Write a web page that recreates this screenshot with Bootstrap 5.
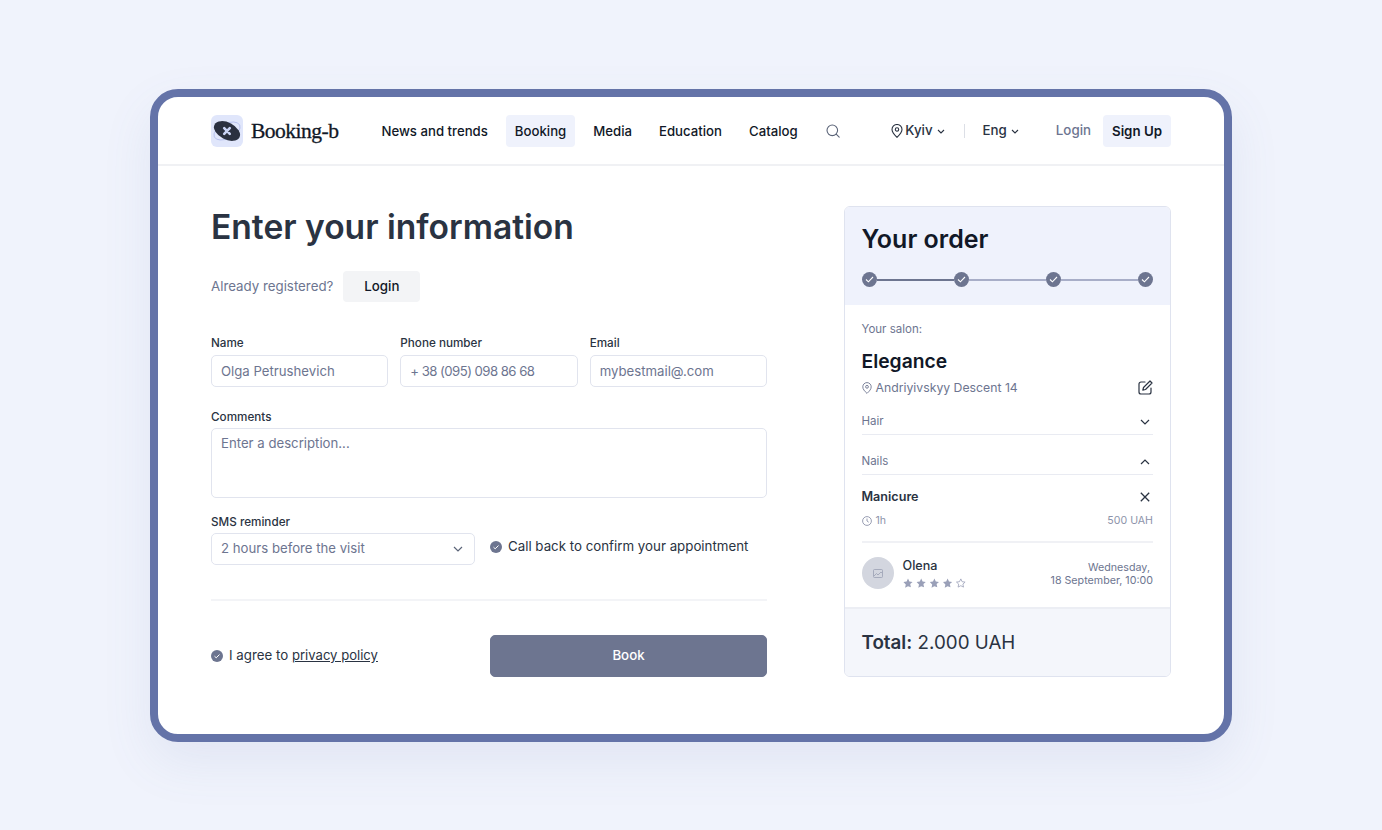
<!DOCTYPE html>
<html lang="en">
<head>
<meta charset="utf-8">
<title>Booking-b</title>
<link rel="stylesheet" href="https://cdn.jsdelivr.net/npm/bootstrap@5.3.0/dist/css/bootstrap.min.css">
<style>
html,body{height:100%}
body{background:#f0f3fc;font-family:Inter,"Noto Sans",sans-serif;color:#2a3342;font-size:13.3px;overflow:hidden}
.stage{height:830px;padding-top:89px;display:flex;justify-content:center}
.frame{width:1082px;height:653px;background:#fff;border:8px solid #6473a8;border-radius:28px;box-shadow:0 20px 50px rgba(100,115,168,.1);overflow:hidden}
.topbar{height:69px;padding:1px 53px 0;border-bottom:2px solid #f0f1f4}
.logo-box{width:32px;height:32px;background:#e0e6fb;border-radius:6px;flex:none}
.logo-text{font-family:"Liberation Serif",serif;font-size:21.6px;color:#111827;letter-spacing:-.55px;margin-left:8px;-webkit-text-stroke:.3px #111827}
.nav-main{margin-left:34px}
.nav-main a{color:#111827;font-weight:500;text-decoration:none;font-size:13.2px;padding:0 9px;height:32px;line-height:32px;border-radius:4px;margin-right:9px;white-space:nowrap}
.nav-main a.on{background:#eff2fc}
.search-ic{margin-left:10px}
.sep{width:1px;height:14px;background:#dcdfe6;margin:0 18px 0 19px}
.loc{color:#2a3342;font-weight:500;white-space:nowrap;margin-left:2px}
.eng{margin-left:0}
.btn-sign{background:#eff2fc;color:#111827;font-weight:600;font-size:13.3px;height:32px;padding:0 9px;line-height:32px;border:0;border-radius:4px}
.login-link{color:#6d7590;font-weight:500;margin:0 12px 0 37px}
.content{padding:40px 53px 0}
.left-col{width:556px;flex:none}
.right-col{width:327.5px;flex:none;margin-left:76.5px}
h1.title{font-size:33.6px;font-weight:600;color:#2a3342;margin:1px 0 0;line-height:40px}
.reg{margin-top:24px}
.reg span{color:#6d7590;font-size:13.3px}
.btn-log{background:#f3f4f6;color:#111827;font-weight:500;font-size:13.3px;height:31px;width:77px;padding:0;border:0;border-radius:4px;margin-left:10px}
.fields{margin-top:34px}
.lab{font-size:11.7px;font-weight:500;color:#2a3342;margin:0 0 4px;line-height:15px;display:block}
.lab.tight{margin-bottom:3px}
.form-control.fx,.form-select.fx{height:32px;font-size:13.2px;padding:0 9px;border:1px solid #e1e4ee;border-radius:5px;color:#6d7590;min-height:0;box-shadow:none}
.form-control.fx::placeholder{color:#6d7590;opacity:1}
.form-control.tel{letter-spacing:-.55px}
.form-select.fx{background-image:none}
textarea.form-control.fx{height:70px;padding-top:5px;resize:none}
.gut{--bs-gutter-x:12px}
.selwrap{position:relative;width:264px}
.selwrap svg{position:absolute;right:12px;top:13px}
.blk-a{margin-top:23px}
.blk-b{margin-top:17px}
.chk{width:12px;height:12px;flex:none}
.chkrow{color:#2a3342;font-size:13.3px;gap:6px}
.chkrow-call{margin:18px 0 0 15px;height:28px}
.divide{height:2px;background:#f3f4f7;margin:34px 0 0}
.actions{margin-top:34px}
.book{width:277px;height:42px;background:#6d7590;color:#fff;border:1px solid #6d7590;border-radius:5px;font-size:13.3px;font-weight:500}
.book:hover{background:#6d7590;color:#fff}
.policy{text-decoration:underline;color:#2a3342;font-size:13.1px}
.ordercard{border:1px solid #dfe3ef;border-radius:6px;overflow:hidden;height:471px;display:flex;flex-direction:column}
.head{background:#eff2fc;height:98px;padding:17px 17px 0;flex:none}
.head h2{font-size:25px;font-weight:600;color:#111827;line-height:30px;margin:0}
.steps{margin-top:18px;height:15px}
.dot{width:15px;height:15px;border-radius:50%;background:#6d7590;flex:none}
.ln{height:2px;flex:1;background:#a8aec8}
.ln.dk{background:#6d7590}
.bodyc{padding:17px 17px 0;flex:1}
.sm{font-size:11.5px;color:#6d7590;line-height:14px}
.salon{font-size:19.3px;font-weight:600;color:#111827;line-height:26px;margin-top:12px}
.addr{font-size:12.25px;color:#6d7590;margin-top:4px;height:20px}
.edit-ic{margin-left:auto;margin-top:-1px}
.acc{height:30px;padding-top:4px;border-bottom:1px solid #e9ebf2;font-size:11.5px;color:#6d7590}
.acc svg{margin-right:3px}
.acc-first{margin-top:7px}
.acc-next{margin-top:10px}
.mani{font-size:12.6px;font-weight:600;color:#2a3342;margin-top:13px;line-height:18px}
.mani svg{margin-right:3px}
.tiny{font-size:10.6px;color:#8d93aa}
.metarow{margin-top:8px;line-height:14px;padding-bottom:13px;border-bottom:2px solid #f0f1f5}
.avatar{width:32px;height:32px;border-radius:50%;background:#d3d6df;flex:none}
.who{margin-top:14px}
.who-txt{margin-left:9px}
.olena{font-size:12.6px;font-weight:500;color:#2a3342;line-height:16px}
.stars{display:block;margin-top:4px}
.when{font-size:10.7px;color:#6d7590;line-height:13px;text-align:right;margin-left:auto;margin-top:2px}
.foot{height:69px;background:#f4f6fb;border-top:2px solid #eceef4;padding:2px 17px 0;font-size:18.8px;color:#2a3342;flex:none}
.foot b{font-weight:600}
</style>
</head>
<body>
<div class="stage">
<div class="frame">
  <header class="topbar d-flex align-items-center">
    <div class="logo-box d-flex align-items-center justify-content-center">
      <svg width="32" height="32" viewBox="0 0 32 32"><ellipse cx="16" cy="16" rx="14" ry="7.5" fill="none" stroke="#aab6ea" stroke-width=".7" transform="rotate(-25 16 16)"/><ellipse cx="16" cy="16" rx="14" ry="8.5" fill="#2a3040" transform="rotate(27 16 16)"/><path d="M13.200 13.200l5.600 5.600M18.800 13.200l-5.600 5.600" stroke="#c8d2f4" stroke-width="2.600" stroke-linecap="round"/></svg>
    </div>
    <span class="logo-text">Booking-b</span>
    <nav class="nav-main d-flex align-items-center">
      <a href="#">News and trends</a><a href="#" class="on">Booking</a><a href="#">Media</a><a href="#">Education</a><a href="#">Catalog</a>
      <svg width="14" height="14" viewBox="0 0 14 14" fill="none" stroke="#5b6478" stroke-width="1.100" stroke-linecap="round" class="search-ic"><circle cx="6.300" cy="6.300" r="5.300"/><path d="M10.200 10.200l3 3"/></svg>
    </nav>
    <div class="d-flex align-items-center ms-auto">
      <svg width="12" height="14" viewBox="0 0 12 14" fill="none" stroke="#2a3342" stroke-width="1.100"><path d="M6 13.300C3 10.500 1 8.200 1 5.500a5 5 0 0 1 10 0c0 2.700-2 5-5 7.800z"/><circle cx="6" cy="5.500" r="1.700"/></svg>
      <span class="loc">Kyiv</span>
      <svg width="8" height="5" viewBox="0 0 8 5" fill="none" stroke="#2a3342" stroke-width="1.100" class="ms-1"><path d="M1 1l3 3 3-3"/></svg>
      <span class="sep"></span>
      <span class="loc eng">Eng</span>
      <svg width="8" height="5" viewBox="0 0 8 5" fill="none" stroke="#2a3342" stroke-width="1.100" class="ms-1"><path d="M1 1l3 3 3-3"/></svg>
      <a href="#" class="login-link text-decoration-none">Login</a>
      <button class="btn btn-sign" type="button">Sign Up</button>
    </div>
  </header>
  <main class="content d-flex">
    <section class="left-col">
      <h1 class="title">Enter your information</h1>
      <div class="reg d-flex align-items-center"><span>Already registered?</span><button type="button" class="btn btn-log">Login</button></div>
      <div class="fields row gut">
        <div class="col-4"><label class="lab">Name</label><input class="form-control fx" placeholder="Olga Petrushevich"></div>
        <div class="col-4"><label class="lab">Phone number</label><input class="form-control fx tel" placeholder="+ 38 (095) 098 86 68"></div>
        <div class="col-4"><label class="lab">Email</label><input class="form-control fx" placeholder="mybestmail@.com"></div>
      </div>
      <div class="blk-a"><label class="lab tight">Comments</label><textarea class="form-control fx" placeholder="Enter a description..."></textarea></div>
      <div class="blk-b d-flex">
        <div><label class="lab tight">SMS reminder</label>
          <div class="selwrap"><select class="form-select fx"><option>2 hours before the visit</option></select>
          <svg width="10" height="6" viewBox="0 0 10 6" fill="none" stroke="#5b6478" stroke-width="1.200"><path d="M1 1l4 4 4-4"/></svg></div>
        </div>
        <div class="chkrow chkrow-call d-flex align-items-center">
          <svg class="chk" viewBox="0 0 12 12"><circle cx="6" cy="6" r="6" fill="#6d7590"/><path d="M3.500 6.200l1.700 1.600 3.300-3.300" fill="none" stroke="#fff" stroke-width="1"/></svg>
          <span>Call back to confirm your appointment</span>
        </div>
      </div>
      <div class="divide"></div>
      <div class="actions d-flex align-items-center justify-content-between">
        <div class="chkrow d-flex align-items-center">
          <svg class="chk" viewBox="0 0 12 12"><circle cx="6" cy="6" r="6" fill="#6d7590"/><path d="M3.500 6.200l1.700 1.600 3.300-3.300" fill="none" stroke="#fff" stroke-width="1"/></svg>
          <span>I agree to <a href="#" class="policy">privacy policy</a></span>
        </div>
        <button type="button" class="btn book">Book</button>
      </div>
    </section>
    <aside class="right-col">
      <div class="ordercard">
        <div class="head">
          <h2>Your order</h2>
          <div class="steps d-flex align-items-center">
            <span class="dot d-flex align-items-center justify-content-center"><svg width="9" height="7" viewBox="0 0 9 7" fill="none" stroke="#fff" stroke-width="1.100"><path d="M1 3.500l2.400 2.300L8 1"/></svg></span><span class="ln dk"></span>
            <span class="dot d-flex align-items-center justify-content-center"><svg width="9" height="7" viewBox="0 0 9 7" fill="none" stroke="#fff" stroke-width="1.100"><path d="M1 3.500l2.400 2.300L8 1"/></svg></span><span class="ln"></span>
            <span class="dot d-flex align-items-center justify-content-center"><svg width="9" height="7" viewBox="0 0 9 7" fill="none" stroke="#fff" stroke-width="1.100"><path d="M1 3.500l2.400 2.300L8 1"/></svg></span><span class="ln"></span>
            <span class="dot d-flex align-items-center justify-content-center"><svg width="9" height="7" viewBox="0 0 9 7" fill="none" stroke="#fff" stroke-width="1.100"><path d="M1 3.500l2.400 2.300L8 1"/></svg></span>
          </div>
        </div>
        <div class="bodyc">
          <div class="sm">Your salon:</div>
          <div class="salon">Elegance</div>
          <div class="addr d-flex align-items-center">
            <svg width="10" height="12" viewBox="0 0 10 12" fill="none" stroke="#6d7590" stroke-width=".9" class="me-1"><path d="M5 11.400C2.500 9 .8 7.200.8 4.800a4.200 4.200 0 0 1 8.400 0C9.200 7.200 7.500 9 5 11.400z"/><circle cx="5" cy="4.800" r="1.400"/></svg>
            <span>Andriyivskyy Descent 14</span>
            <svg class="edit-ic" width="15" height="15" viewBox="0 0 15 15" fill="none" stroke="#2a3342" stroke-width="1.200" stroke-linecap="round" stroke-linejoin="round"><path d="M7 2H3a2 2 0 0 0-2 2v8a2 2 0 0 0 2 2h8a2 2 0 0 0 2-2V8"/><path d="M12 1l2 2-6.500 6.500-2.700.7.700-2.700z"/></svg>
          </div>
          <div class="acc acc-first d-flex align-items-center justify-content-between"><span>Hair</span><svg width="10" height="6" viewBox="0 0 10 6" fill="none" stroke="#2a3342" stroke-width="1.200"><path d="M1 1l4 4 4-4"/></svg></div>
          <div class="acc acc-next d-flex align-items-center justify-content-between"><span>Nails</span><svg width="10" height="6" viewBox="0 0 10 6" fill="none" stroke="#2a3342" stroke-width="1.200"><path d="M1 5l4-4 4 4"/></svg></div>
          <div class="mani d-flex align-items-center justify-content-between"><span>Manicure</span><svg width="10" height="10" viewBox="0 0 10 10" fill="none" stroke="#2a3342" stroke-width="1.300"><path d="M.8.800l8.400 8.400M9.200.800L.800 9.200"/></svg></div>
          <div class="metarow tiny d-flex align-items-center">
            <svg width="10" height="10" viewBox="0 0 10 10" fill="none" stroke="#8d93aa" stroke-width=".9" class="me-1"><circle cx="5" cy="5" r="4.400"/><path d="M5 2.500V5l1.700 1.200"/></svg>
            <span>1h</span><span class="ms-auto">500 UAH</span>
          </div>
          <div class="who d-flex align-items-center">
            <span class="avatar d-flex align-items-center justify-content-center"><svg width="10" height="9" viewBox="0 0 10 9" fill="none" stroke="#9a9fb3" stroke-width=".8"><rect x=".5" y=".5" width="9" height="8" rx="1"/><path d="M1 7l2.500-2.500L5 6l3-3 1 1"/></svg></span>
            <div class="who-txt">
              <div class="olena">Olena</div>
              <svg width="64" height="10" viewBox="0 0 64 10" class="stars">
                <g fill="#9aa0b8"><path d="M5 .5l1.400 3 3.200.4-2.400 2.200.7 3.200L5 8.200 2.100 9.800l.7-3.200L.4 3.900l3.200-.4z"/><path transform="translate(13.200)" d="M5 .5l1.400 3 3.200.4-2.400 2.200.7 3.200L5 8.200 2.100 9.800l.7-3.200L.4 3.900l3.200-.4z"/><path transform="translate(26.400)" d="M5 .5l1.400 3 3.200.4-2.400 2.200.7 3.200L5 8.200 2.100 9.800l.7-3.200L.4 3.900l3.200-.4z"/><path transform="translate(39.600)" d="M5 .5l1.400 3 3.200.4-2.400 2.200.7 3.200L5 8.200 2.100 9.800l.7-3.200L.4 3.900l3.200-.4z"/></g>
                <path transform="translate(52.800)" fill="none" stroke="#9aa0b8" stroke-width=".8" d="M5 .9l1.300 2.800 3 .4-2.200 2 .6 3L5 7.700 2.300 9.100l.6-3-2.200-2 3-.4z"/>
              </svg>
            </div>
            <div class="when">Wednesday,&nbsp;<br>18 September, 10:00</div>
          </div>
        </div>
        <div class="foot d-flex align-items-center"><span><b>Total:</b> 2.000 UAH</span></div>
      </div>
    </aside>
  </main>
</div>
</div>
<script src="https://cdn.jsdelivr.net/npm/bootstrap@5.3.0/dist/js/bootstrap.bundle.min.js"></script>
</body>
</html>
